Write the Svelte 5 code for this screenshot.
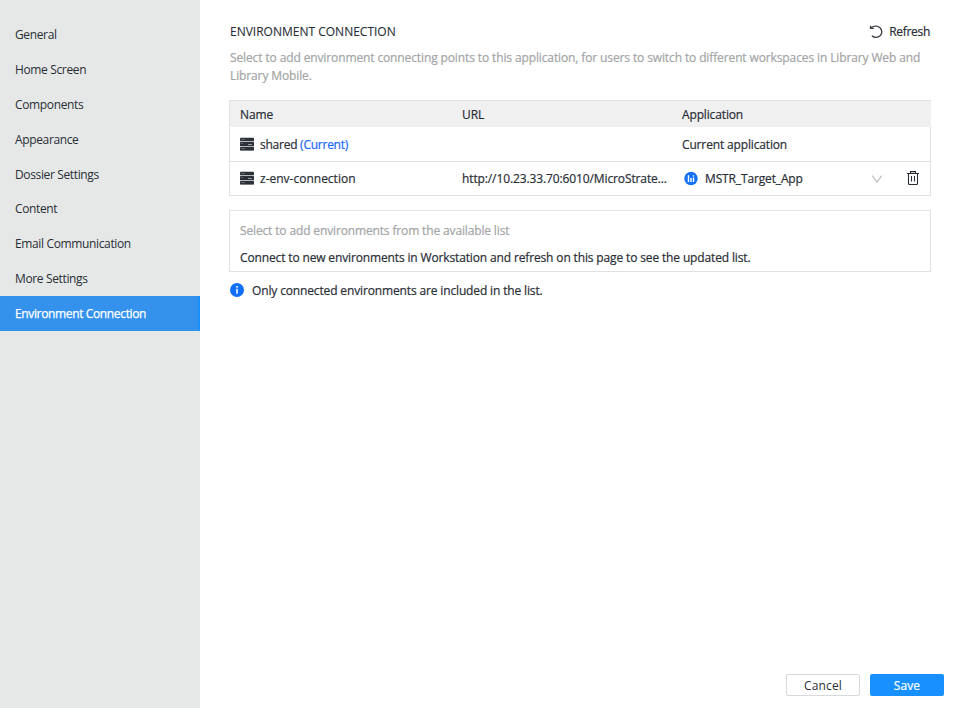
<script>
  const sections = ['General', 'Home Screen', 'Components', 'Appearance', 'Dossier Settings', 'Content', 'Email Communication', 'More Settings', 'Environment Connection'];
  let active = $state('Environment Connection');
</script>

{#snippet server()}
  <svg class="server" width="14" height="14" viewBox="0 0 14 14">
    <rect x="0.2" y="0.2" width="13.6" height="13.6" rx="1" fill="#b4b6b8" />
    <rect x="0" y="1" width="14" height="3" rx="0.4" fill="#2c3038" />
    <rect x="0" y="5" width="14" height="4" rx="0.4" fill="#2c3038" />
    <rect x="0" y="10" width="14" height="3.4" rx="0.4" fill="#2c3038" />
    <path d="M1.5 2.5h1M3.5 2.5h1M1.5 6.5h1M8 7.5h4M1.5 11.5h1M3.5 11.5h1" stroke="#a5a8ac" stroke-width="0.9" />
  </svg>
{/snippet}

<div class="app">
  <nav>
    {#each sections as s}
      <button class="item" class:active={s === active} onclick={() => (active = s)}>{s}</button>
    {/each}
  </nav>
  <main>
    <header>
      <h1>ENVIRONMENT CONNECTION</h1>
      <button class="refresh">
        <svg width="14" height="14" viewBox="0 0 14 14" fill="none" stroke="#3b4045" stroke-width="1.4">
          <path d="M2.2 2.7C4.6.8 8.8.5 11 2.7c2.4 2.3 2.4 5.8.1 8.1-2.3 2.1-5.9 2.1-8.2-.1" />
          <path d="M1.6.7v2.7h3.2" />
        </svg>
        <span>Refresh</span>
      </button>
    </header>
    <p class="intro">Select to add environment connecting points to this application, for users to switch to different workspaces in Library Web and<br />Library Mobile.</p>

    <div class="table">
      <div class="row head">
        <span class="name">Name</span><span class="url">URL</span><span class="application">Application</span>
      </div>
      <div class="row first">
        <span class="name">{@render server()}<span class="shared">shared <b>(Current)</b></span></span>
        <span class="url"></span>
        <span class="application">Current application</span>
      </div>
      <div class="row last">
        <span class="name">{@render server()}<span class="zenv">z-env-connection</span></span>
        <span class="url">http://10.23.33.70:6010/MicroStrate...</span>
        <span class="application">
          <svg class="logo" width="14" height="14" viewBox="0 0 14 14">
            <circle cx="7" cy="6.5" r="6.7" fill="#1672f5" />
            <path d="M4.5 3.2v6.8M7 5.9V10M9.5 5.6V10" stroke="#fff" stroke-width="1.4" />
            <path d="M8.8 3.9h1.4" stroke="#fff" stroke-width="1.1" />
          </svg>
          <span class="target">MSTR_Target_App</span>
          <svg class="chevron" width="10" height="8" viewBox="0 0 10 8" fill="none" stroke="#b5b7b9" stroke-width="1.1"><path d="M.2.6 5 7.2 9.8.6" /></svg>
          <svg class="trash" width="12" height="14" viewBox="0 0 12 14" fill="none" stroke="#292e35" stroke-width="1.1">
            <path d="M0 2.5h12M3.5 2.4V.6h5v1.8M1.5 2.8v9.7q0 1 1 1h7q1 0 1-1V2.8M4.5 5v5.5M7.5 5v5.5" />
          </svg>
        </span>
      </div>
    </div>

    <section>
      <div class="hint">Select to add environments from the available list</div>
      <div class="connect">Connect to new environments in Workstation and refresh on this page to see the updated list.</div>
    </section>
    <div class="note">
      <svg width="14" height="14" viewBox="0 0 14 14"><circle cx="7" cy="7" r="7" fill="#1270f8" /><path d="M7 3v1.7M7 5.8v5" stroke="#fff" stroke-width="1.5" /></svg>
      <span>Only connected environments are included in the list.</span>
    </div>
    <footer>
      <button class="cancel">Cancel</button>
      <button class="save">Save</button>
    </footer>
  </main>
</div>

<style>
  .app { display: flex; width: 960px; height: 708px; background: #fff; color: #292e36; font: 500 12px/18px "Open Sans", "Noto Sans", sans-serif; letter-spacing: -0.142px; -webkit-text-stroke: 0.2px; overflow: hidden; white-space: nowrap; }
  button { font: inherit; color: inherit; letter-spacing: inherit; border: 0; background: none; padding: 0; margin: 0; }
  nav { width: 200px; flex: none; box-sizing: border-box; padding-top: 17.2px; background: #e5e8e7; display: flex; flex-direction: column; letter-spacing: -0.36px; }
  .item { height: 34.86px; flex: none; text-align: left; padding: 0.9px 0 0 15px; font-weight: 400; -webkit-text-stroke: 0; }
  .item.active { background: #3492ed; color: #fff; border-right: 2px solid #1890ff; -webkit-text-stroke: 0.25px; }
  main { flex: 1; min-width: 0; display: flex; flex-direction: column; padding: 23px 16px 12px 29px; }
  header { display: flex; justify-content: space-between; margin: 0 14px 0 1px; height: 18px; }
  h1 { margin: 0; font: inherit; font-weight: 400; letter-spacing: 0; -webkit-text-stroke: 0.1px; }
  .refresh { display: flex; align-items: center; gap: 6px; letter-spacing: -0.3px; }
  .intro { margin: 8px 0 0 1px; color: #a3a5a6; letter-spacing: -0.12px; }
  .table { width: 700px; margin-top: 15px; border: 1px solid #e0e1e1; }
  .row { display: flex; align-items: center; height: 34px; border-bottom: 1px solid #e0e1e1; padding-left: 10px; width: 691px; }
  .head { height: 25px; padding-top: 1px; background: #f0f0f0; border: 0; }
  .last { height: 33px; border: 0; }
  .name { width: 222px; display: flex; align-items: center; gap: 6px; }
  .url { width: 220px; letter-spacing: -0.115px; }
  .first span.application, .shared { padding-top: 2px; }
  .first .application { letter-spacing: -0.15px; }
  .shared { letter-spacing: -0.25px; }
  .zenv { letter-spacing: 0; }
  .server { position: relative; top: -0.5px; }
  .last .server { top: -1px; }
  .application { flex: 1; display: flex; align-items: center; }
  b { font-weight: 500; color: #1769ff; }
  .logo { margin-left: 2px; margin-right: 7px; }
  .target { width: 167px; }
  .trash { margin: 0 0 2px 25px; }
  section { width: 680px; height: 49px; padding: 11px 10px 0; margin-top: 14px; border: 1px solid #e0e1e1; }
  .hint { color: #a3a5a6; }
  .connect { margin-top: 9px; }
  .note { display: flex; align-items: center; gap: 8px; margin: 10px 0 0 1px; }
  .note svg { margin-bottom: 2px; }
  footer { margin-top: auto; display: flex; justify-content: flex-end; gap: 10px; letter-spacing: 0.12px; }
  footer button { width: 74px; height: 22px; border-radius: 2px; box-sizing: border-box; padding-top: 1px; }
  .cancel { border: 1px solid #d9d9d9; font-weight: 400; -webkit-text-stroke: 0; }
  .save { background: #1890ff; color: #fff; }
</style>
